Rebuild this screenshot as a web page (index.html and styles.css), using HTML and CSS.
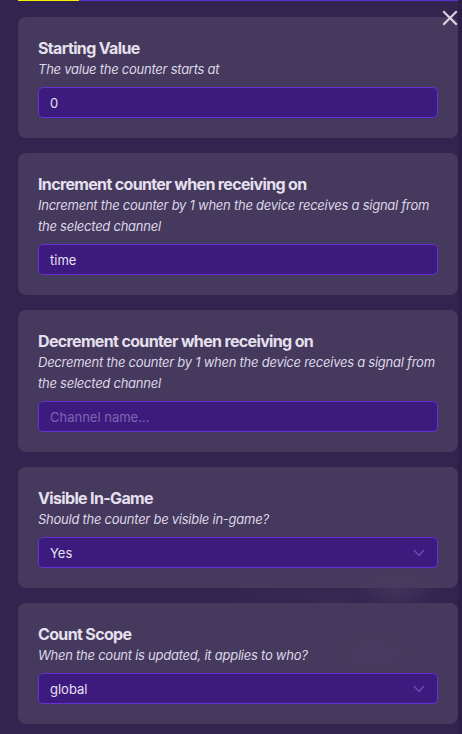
FILE: index.html
```html
<!DOCTYPE html>
<html lang="en">
<head>
<meta charset="utf-8">
<title>Counter settings</title>
<link rel="stylesheet" href="styles.css">
</head>
<body>
<div class="panel">
  <div class="topbar"><span class="progress"></span><span class="track"></span></div>
  <button class="close" aria-label="Close">
    <svg viewBox="0 0 16 16" width="16" height="16"><path d="M2 2 L14 14 M14 2 L2 14" stroke="#d9d2e3" stroke-width="2.2" stroke-linecap="square" fill="none"/></svg>
  </button>
  <div class="cards">
    <section class="card">
      <h2 class="title">Starting Value</h2>
      <p class="desc">The value the counter starts at</p>
      <div class="field">0</div>
    </section>
    <section class="card">
      <h2 class="title">Increment counter when receiving on</h2>
      <p class="desc">Increment the counter by 1 when the device receives a signal from the selected channel</p>
      <div class="field">time</div>
    </section>
    <section class="card">
      <h2 class="title">Decrement counter when receiving on</h2>
      <p class="desc">Decrement the counter by 1 when the device receives a signal from the selected channel</p>
      <div class="field placeholder">Channel name...</div>
    </section>
    <section class="card">
      <h2 class="title">Visible In-Game</h2>
      <p class="desc">Should the counter be visible in-game?</p>
      <div class="field select"><span>Yes</span>
        <svg class="chev" viewBox="0 0 12 8" width="12" height="8"><path d="M1 1 L6 6.5 L11 1" stroke="#6f4fb8" stroke-width="1.2" fill="none"/></svg>
      </div>
    </section>
    <section class="card">
      <h2 class="title">Count Scope</h2>
      <p class="desc">When the count is updated, it applies to who?</p>
      <div class="field select"><span>global</span>
        <svg class="chev" viewBox="0 0 12 8" width="12" height="8"><path d="M1 1 L6 6.5 L11 1" stroke="#6f4fb8" stroke-width="1.2" fill="none"/></svg>
      </div>
    </section>
  </div>
</div>
</body>
</html>
```
FILE: styles.css
```css
html, body {
  margin: 0;
  padding: 0;
  height: 100%;
  background: #2c1f47;
}
body {
  font-family: Inter, "Noto Sans", sans-serif;
  color: #e4deec;
  overflow: hidden;
}
.panel {
  position: relative;
  width: 458px;
  height: 734px;
  box-sizing: border-box;
  padding: 0 0 0 18px;
  background:
    radial-gradient(ellipse 40px 22px at 398px 588px, rgba(80, 66, 102, 0.5), transparent),
    radial-gradient(ellipse 70px 30px at 300px 690px, rgba(70, 56, 95, 0.4), transparent),
    radial-gradient(ellipse 50px 26px at 375px 655px, rgba(80, 66, 102, 0.4), transparent),
    radial-gradient(ellipse 120px 90px at 330px 600px, rgba(58, 44, 84, 0.55), transparent),
    #33244f;
}
.topbar {
  display: flex;
  height: 1px;
  margin-bottom: 16px;
}
.progress {
  width: 61px;
  background: #f4f000;
}
.track {
  flex: 1;
  background: #5b30d0;
}
.close {
  position: absolute;
  top: 10px;
  right: 0;
  width: 16px;
  height: 16px;
  padding: 0;
  border: 0;
  background: none;
}
.close svg { display: block; }
.cards {
  display: flex;
  flex-direction: column;
  gap: 15px;
  width: 440px;
}
.card {
  background: rgba(72, 60, 96, 0.86);
  border-radius: 8px;
  padding: 20px 20px 20px;
}
.title {
  margin: 0;
  font-size: 16px;
  line-height: 22px;
  font-weight: 700;
  color: #e6e0ee;
  letter-spacing: -0.65px;
}
.desc {
  margin: 0 0 7px;
  font-size: 13px;
  line-height: 21px;
  font-style: italic;
  color: #ddd6e7;
  letter-spacing: -0.25px;
}
.field {
  display: flex;
  align-items: center;
  justify-content: space-between;
  height: 31px;
  box-sizing: border-box;
  border: 1px solid #6631d2;
  border-radius: 5px;
  background: #3d1a7e;
  padding: 0 11px;
  font-size: 13px;
  color: #e8e2f0;
}
.placeholder {
  color: #7f66b0;
}
.chev {
  margin-right: 1px;
}
```
